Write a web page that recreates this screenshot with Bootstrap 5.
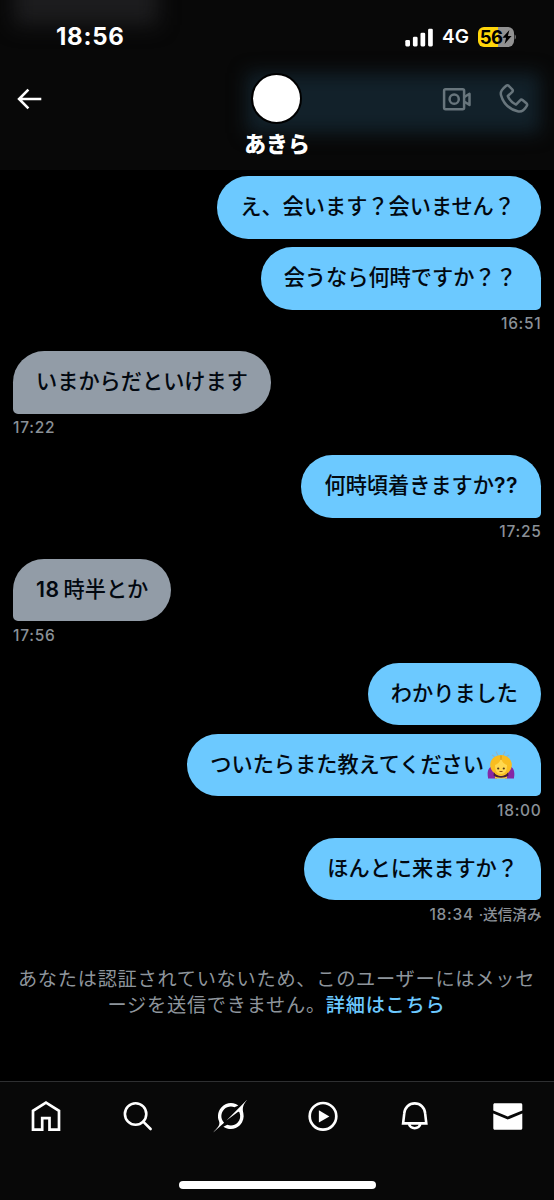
<!DOCTYPE html>
<html lang="ja" data-bs-theme="dark">
<head>
<meta charset="utf-8">
<meta name="viewport" content="width=device-width, initial-scale=1">
<title>あきら</title>
<link href="https://cdn.jsdelivr.net/npm/bootstrap@5.3.0/dist/css/bootstrap.min.css" rel="stylesheet">
<style>
  body { background: #000; font-family: Inter, "Noto Sans CJK JP", sans-serif; }
  .screen { height: 1200px; }
  .bar { background: #080808; }
  .topbar { height: 170px; }
  .glow { filter: blur(9px); background: #12212a; left: 247px; right: 14px; top: 73px; height: 60px; }
  .glow-dim { filter: blur(10px); background: #1c1c1e; left: 14px; width: 144px; top: -20px; height: 45px; }
  .status { height: 73px; padding-left: 56px; padding-right: 38px; }
  .clock { font-size: 24px; font-weight: 700; line-height: 28px; letter-spacing: .75px; }
  .net { font-size: 19px; font-weight: 600; line-height: 28px; margin-left: 8px; margin-right: 9px; }
  .battery { width: 36px; height: 20px; border-radius: 6px; background: linear-gradient(90deg, #ffd60a 20px, #929292 20px); color: #000; font-size: 18.5px; font-weight: 700; letter-spacing: -.6px; line-height: 20px; }
  .head { height: 50px; }
  .avatar { width: 51px; height: 51px; border: 2.5px solid #000; background: #fff; }
  .who { font-size: 21.8px; font-weight: 900; line-height: 32px; margin-top: 5px; }
  .tools { color: #68757c; }
  .phone { margin-left: 25px; }
  .chat { padding: 6.3px 13px 0; }
  .bubble { height: 62.5px; line-height: 60.5px; padding: 0 23px; border-radius: 31.25px; font-size: 21.2px; font-weight: 500; color: #020810; white-space: nowrap; }
  .mine { background: #6cc9ff; }
  .theirs { background: #929ca7; }
  .mine.tail { border-bottom-right-radius: 5px; }
  .theirs.tail { border-bottom-left-radius: 5px; }
  .pad-wide { padding-right: 26px; }
  .pad-mid { padding-right: 24.3px; }
  .latin { font-weight: 600; letter-spacing: .5px; }
  .follow { margin-top: 8.7px; }
  .stamp { height: 41.3px; padding-top: 4.5px; font-size: 15.5px; line-height: 19px; font-weight: 500; letter-spacing: .72px; color: #8a9097; margin-right: -.5px; }
  .sent { font-size: 14.6px; letter-spacing: 0; }
  .notice { margin-top: 26px; margin-left: -1px; font-size: 19.2px; letter-spacing: .74px; line-height: 25.8px; color: #8e959c; white-space: nowrap; }
  .notice a { color: #6cc9ff; font-weight: 500; }
  .tabs { height: 119px; border-top: 1.5px solid #2e2f31; padding-top: 16px; }
  .pill { width: 197px; height: 8px; margin-bottom: 11px; }
  svg { display: block; flex: none; }
</style>
</head>
<body>
<div class="screen d-flex flex-column overflow-hidden">
  <header class="bar topbar position-relative overflow-hidden text-white flex-shrink-0">
    <div class="glow-dim position-absolute"></div>
    <div class="glow position-absolute"></div>
    <div class="status position-relative d-flex align-items-center justify-content-between">
      <span class="clock">18:56</span>
      <div class="d-flex align-items-center">
        <svg width="29" height="20" viewBox="0 0 29 20" fill="#fff"><rect x=".3" y="13" width="4.7" height="6.4" rx="1.3"/><rect x="7.9" y="9.7" width="4.7" height="9.7" rx="1.3"/><rect x="15.5" y="5.8" width="4.7" height="13.6" rx="1.3"/><rect x="23.1" y="1.7" width="4.7" height="17.7" rx="1.3"/></svg>
        <span class="net">4G</span>
        <div class="battery d-flex align-items-center justify-content-center"><span>56</span>
          <svg width="10" height="14" viewBox="0 0 10 14" fill="#000"><path d="M7.4 0 .4 7.8h3.7L2.6 14l7-8H5.9z"/></svg>
        </div>
        <svg width="2" height="8" viewBox="0 0 2 8"><path d="M.7 1.2c1.4 1.4 1.4 4.2 0 5.6z" fill="#929292"/></svg>
      </div>
    </div>
    <div class="head position-relative row g-0 align-items-center">
      <div class="col-5 ps-3">
        <svg width="28" height="24" viewBox="0 0 28 24" fill="none" stroke="#fff" stroke-width="2.6"><path d="M25.3 12H3M12.4 2.7 3.1 12l9.3 9.3"/></svg>
      </div>
      <div class="col-2 d-flex justify-content-center"><div class="avatar rounded-circle"></div></div>
      <div class="tools col-5 d-flex justify-content-end align-items-center">
        <svg width="32" height="32" viewBox="0 0 32 32" fill="none" stroke="currentColor" stroke-width="2.5" stroke-linejoin="round"><rect x="3.1" y="6.3" width="20" height="20" rx="1.5"/><circle cx="13.2" cy="16.2" r="4.6"/><path d="m23.400 14 5.100-3.200v11.100l-5.100-3.200"/></svg>
        <svg class="phone me-4" width="32" height="32" viewBox="0 0 32 32" fill="none" stroke="currentColor" stroke-width="2.5" stroke-linejoin="round"><path d="M8.2 2.8c.9-.8 1.6-.8 2.5 0l3.500 3.500c.8.8.8 1.700.1 2.600L9.800 13c1.500 4 4.400 6.800 8.200 8.600l4.100-4.300c.8-.9 1.800-.8 2.700-.1l3.600 3.100c.9.8 1 1.600.4 2.600-2.300 4.100-5.400 6.400-9.200 5.400C10.900 26 5 19.500 3 12.200c-1-4 1.700-6.400 5.200-9.400z"/></svg>
      </div>
    </div>
    <div class="who position-relative text-center">あきら</div>
  </header>

  <main class="chat flex-grow-1 d-flex flex-column">
    <div class="bubble mine pad-wide align-self-end">え、会います？会いません？</div>
    <div class="bubble mine tail follow pad-mid align-self-end">会うなら何時ですか？？</div>
    <div class="stamp align-self-end">16:51</div>
    <div class="bubble theirs tail align-self-start">いまからだといけます</div>
    <div class="stamp align-self-start">17:22</div>
    <div class="bubble mine tail align-self-end">何時頃着きますか<span class="latin">??</span></div>
    <div class="stamp align-self-end">17:25</div>
    <div class="bubble theirs tail align-self-start"><span class="latin">18</span><span class="ms-1">時半とか</span></div>
    <div class="stamp align-self-start">17:56</div>
    <div class="bubble mine align-self-end">わかりました</div>
    <div class="bubble mine tail follow pad-wide align-self-end d-flex align-items-start">ついたらまた教えてください
      <svg style="margin:16px 0 0 3px" width="28" height="30" viewBox="0 0 28 30">
        <path d="M5 5 8 7M9 1.500l2 4M18 1.500l-2 4M22 5l-3 2" stroke="#91b5c7" stroke-width="1.200" fill="none"/>
        <path d="M1 27.500c-1-5 0-10 4-11l5 4v8H1zM27 27.500c1-5 0-10-4-11l-5 4v8h9z" fill="#8427a5"/>
        <path d="M8 23h12v5.500H8z" fill="#ffce36"/>
        <path d="M4 19C1 11 7 5 14 5s13 6 10 14c-2 4-5.500 6-10 6s-8-2-10-6z" fill="#f9bd20"/>
        <path d="M8 15c3-1 5-3 6-7 1 4 3 6 6 7 0 6-2 9-6 9s-6-3-6-9z" fill="#ffd84f"/>
        <path d="M7 22.500c3 4.500 11 4.500 14 0l.5 3c-4 3-11 3-15 0z" fill="#482036"/>
        <circle cx="11.200" cy="18.500" r="1.100" fill="#553718"/><circle cx="16.800" cy="18.500" r="1.100" fill="#553718"/><path d="M12.500 21.500h3" stroke="#8b5518"/>
        <path d="M14 5.500V10" stroke="#c88712" stroke-width=".8"/>
      </svg>
    </div>
    <div class="stamp align-self-end">18:00</div>
    <div class="bubble mine tail align-self-end">ほんとに来ますか？</div>
    <div class="stamp align-self-end">18:34 <span class="sent">·送信済み</span></div>
    <div class="notice text-center">あなたは認証されていないため、このユーザーにはメッセ<br>ージを送信できません。<a class="text-decoration-none" href="#">詳細はこちら</a></div>
  </main>

  <nav class="bar tabs d-flex flex-column justify-content-between align-items-center flex-shrink-0">
    <div class="row row-cols-6 g-0 w-100 text-white">
      <div class="col d-flex justify-content-center"><svg width="36" height="36" viewBox="0 0 36 36" fill="none" stroke="currentColor" stroke-width="2.7"><path d="m18 4.700 13 8.100v18.900h-9.500V20.200h-7.300v11.500H5V12.800z"/></svg></div>
      <div class="col d-flex justify-content-center"><svg width="36" height="36" viewBox="0 0 36 36" fill="none" stroke="currentColor" stroke-width="2.600"><circle cx="15.600" cy="16" r="10.700"/><path d="m23.200 23.600 7.400 7.400" stroke-linecap="round"/></svg></div>
      <div class="col d-flex justify-content-center"><svg width="36" height="36" viewBox="0 0 36 36" fill="currentColor"><path transform="translate(.2 1.200) scale(1.040)" d="M12.745 20.540l10.970-8.190c.539-.4 1.307-.244 1.564.38 1.349 3.288.746 7.241-1.938 9.955-2.683 2.714-6.417 3.310-9.830 1.954l-3.728 1.745c5.347 3.697 11.840 2.782 15.898-1.324 3.219-3.255 4.216-7.692 3.284-11.693l.008.009c-1.351-5.878.332-8.227 3.782-13.031L33 0l-4.540 4.590v-.014L12.743 20.544m-2.263 1.987c-3.837-3.707-3.175-9.446.1-12.755 2.420-2.449 6.388-3.448 9.852-1.979l3.720-1.737c-.67-.49-1.530-1.017-2.515-1.387-4.455-1.854-9.789-.931-13.410 2.728-3.483 3.523-4.579 8.940-2.697 13.561 1.405 3.454-.899 5.898-3.220 8.364C1.490 30.200.666 31.074 0 32l10.478-9.466"/></svg></div>
      <div class="col d-flex justify-content-center"><svg width="36" height="36" viewBox="0 0 36 36"><circle cx="18" cy="18.300" r="13.300" fill="none" stroke="currentColor" stroke-width="2.700"/><path fill="currentColor" d="m13.900 12.200 10.500 6.200-10.500 6.200z"/></svg></div>
      <div class="col d-flex justify-content-center"><svg width="36" height="36" viewBox="0 0 36 36" fill="none" stroke="currentColor" stroke-width="2.600"><path d="M17.700 5.400c5.700 0 10 4.200 10.400 9.800l1.200 10.200H6.100l1.200-10.200C7.700 9.600 12 5.400 17.700 5.400zM12 25.500c.7 6.300 10.700 6.300 11.400 0"/></svg></div>
      <div class="col d-flex justify-content-center"><svg width="36" height="36" viewBox="0 0 36 36" fill="currentColor"><path d="M3.300 12.400V6.800c0-.9.600-1.500 1.500-1.500h26c.9 0 1.500.6 1.500 1.500v5.600l-14.500 6zM3.300 15.500l14.500 6 14.500-6v14.700c0 .9-.6 1.500-1.500 1.500h-26c-.9 0-1.500-.6-1.500-1.500z"/></svg></div>
    </div>
    <div class="pill bg-white rounded-pill"></div>
  </nav>
</div>
<script src="https://cdn.jsdelivr.net/npm/bootstrap@5.3.0/dist/js/bootstrap.bundle.min.js"></script>
</body>
</html>
